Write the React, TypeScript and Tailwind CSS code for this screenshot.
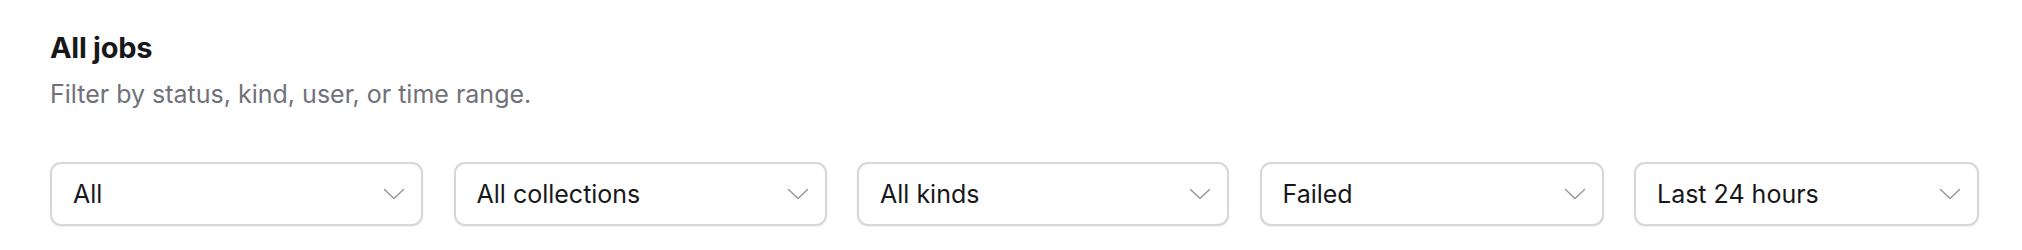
import React from 'react';

const filters = [
  { label: 'All', w: 'w-[373px]' },
  { label: 'All collections', w: 'w-[373px]' },
  { label: 'All kinds', w: 'w-[372px]' },
  { label: 'Failed', w: 'w-[344px]' },
  { label: 'Last 24 hours', w: 'w-[345px]' },
];

function Chevron() {
  return (
    <svg width="22" height="12" viewBox="0 0 22 12" fill="none" stroke="#94949c" strokeWidth="1.4" strokeLinecap="round" strokeLinejoin="round">
      <path d="M1.5 1.5 11 10.5 20.5 1.5" />
    </svg>
  );
}

function FilterSelect({ label, w }: { label: string; w: string }) {
  return (
    <button
      type="button"
      className={`${w} h-[64px] shrink-0 flex items-center justify-between pl-[21px] pr-[16px] bg-white border-2 border-[#d6d6db] rounded-[11px] shadow-[0_1px_2px_rgba(0,0,0,0.06)] text-left`}
    >
      <span className="text-[25px] leading-none text-[#18181b]">{label}</span>
      <Chevron />
    </button>
  );
}

export default function App() {
  return (
    <div className="w-[2022px] h-[250px] bg-white px-[50px] pt-[29px]" style={{ fontFamily: 'Inter, "Noto Sans", sans-serif' }}>
      <h2 className="text-[29px] leading-[38px] font-bold text-[#18181b] tracking-[-0.01em]">All jobs</h2>
      <p className="mt-[10px] text-[25px] leading-[34px] text-[#71717a]">Filter by status, kind, user, or time range.</p>
      <div className="mt-[51px] flex gap-[30.5px]">
        {filters.map((f) => (
          <FilterSelect key={f.label} label={f.label} w={f.w} />
        ))}
      </div>
    </div>
  );
}
